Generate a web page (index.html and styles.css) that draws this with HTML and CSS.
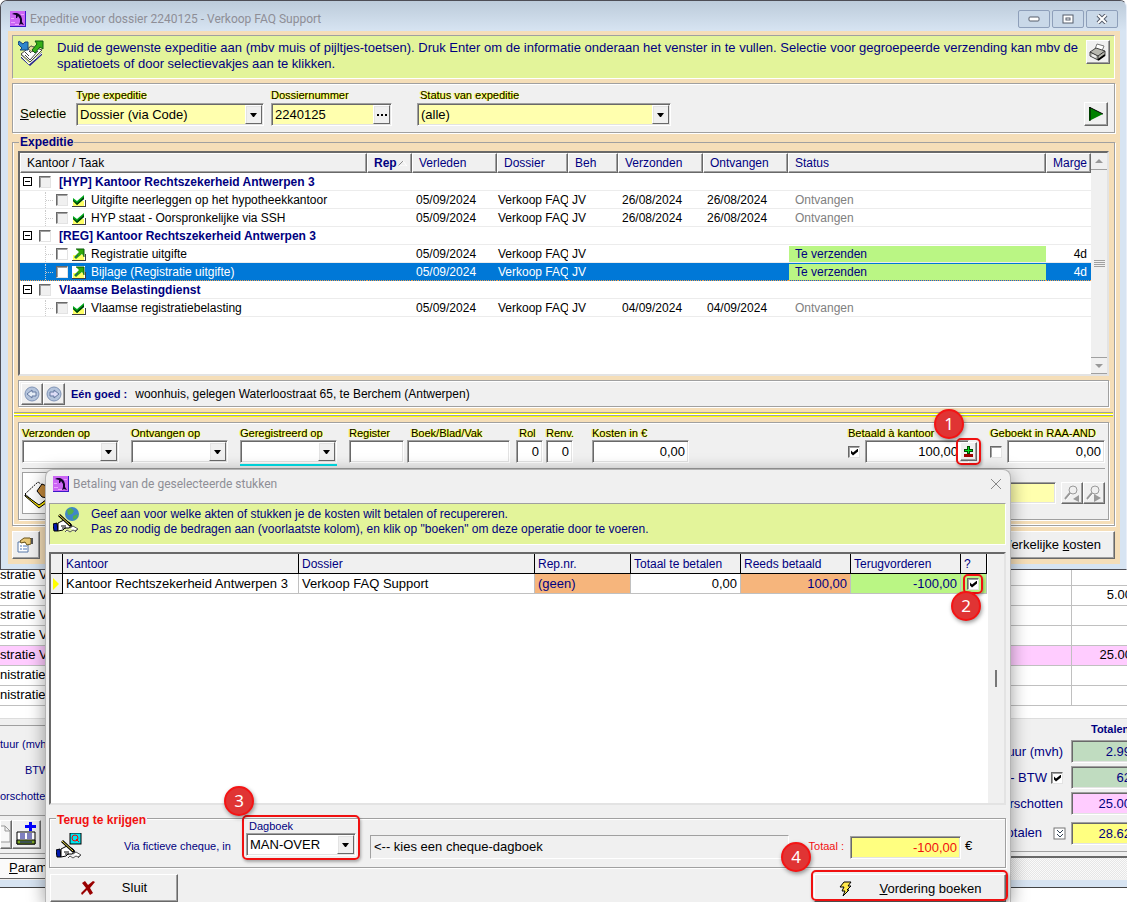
FILE: index.html
```html
<!DOCTYPE html>
<html lang="nl">
<head>
    <meta charset="UTF-8">
    <meta name="viewport" content="width=device-width, initial-scale=1.0">
    <title>Expeditie voor dossier 2240125 - Verkoop FAQ Support</title>
    <link rel="stylesheet" href="styles.css">
</head>
<body>
    <!-- Shared icons -->
    <svg class="sprite" aria-hidden="true">
        <symbol id="dolphin" viewBox="0 0 16 16">
            <rect width="16" height="16" fill="#3a18c8"/>
            <rect width="15" height="15" fill="#cc66f4"/>
            <path d="M1 11h4v1H1zM5 13h4v1H5zM1 7h3v1H1zM11 3h3v1h-3z" fill="#e9a4ff"/>
            <path d="M2 3l2-1h3l2 1 2 2 1 3v3l2 3-3-1-2 1 1-3V8L8 5 7 7H6V4z" fill="#12042c"/>
        </symbol>
        <symbol id="down" viewBox="0 0 7 4"><path d="M0 0h7L4 4H3z" fill="#000"/></symbol>
        <symbol id="done" viewBox="0 0 14 13">
            <path d="M1 7h11v5H1z" fill="#ffff66"/>
            <path d="M0 12h13V6h1v7H0z" fill="#404040"/>
            <path d="M1 4l4 3 7-6v4l-7 6-4-4z" fill="#00a81c"/>
            <path d="M1 6l4 3 7-6v2l-7 6-4-4z" fill="#003c08"/>
        </symbol>
        <symbol id="send" viewBox="0 0 14 13">
            <path d="M0 0h13v12H0z" fill="#fff"/>
            <path d="M1 7h11v5H1z" fill="#ffff66"/>
            <path d="M0 12h13V6h1v7H0z" fill="#404040"/>
            <path d="M4 1h8v8L10 6l-6 5-2-2 5-5z" fill="#2fa80c"/>
            <path d="M4 1h8v8" fill="none" stroke="#0b5a08"/>
            <path d="M3 10l3-3" fill="none" stroke="#1c3c9c"/>
        </symbol>
        <symbol id="hand" viewBox="0 0 26 26">
            <path d="M0 17l4-1 1 8H1z" fill="#0018b0" stroke="#000"/>
            <path d="M5 16l6-3 6 3 2 3-3 2h-4l-2 2-5 1z" fill="#fff" stroke="#000"/>
            <path d="M8 19h5M9 21h4" stroke="#000"/>
            <path d="M6 8l12 11" stroke="#000" stroke-width="3"/>
            <path d="M6 8l11 10" stroke="#f2e34b" stroke-width="1"/>
            <path d="M12 25l2-2 3 2 3-2 2 1 3-2M17 21l3-2 5 3-3 3" fill="#fff" stroke="#555"/>
        </symbol>
        <symbol id="lens" viewBox="0 0 17 17">
            <circle cx="9" cy="5" r="4" fill="#f0f0f0" stroke="#9a9a9a"/>
            <path d="M6 8l-5 6" stroke="#9a9a9a" stroke-width="2"/>
            <path d="M2 15l5-6" stroke="#fff"/>
        </symbol>
    </svg>

    <main class="desktop">
        <!-- Expeditie window -->
        <section class="window">
            <header class="titlebar">
                <svg class="app-icon"><use href="#dolphin"/></svg>
                <h1>Expeditie voor dossier 2240125 - Verkoop FAQ Support</h1>
                <div class="caption-buttons">
                    <button aria-label="Minimaliseren"><svg width="12" height="6"><rect x="1" y="1" width="10" height="4" rx="1" fill="#fff" stroke="#555c6b"/></svg></button>
                    <button aria-label="Maximaliseren"><svg width="12" height="10"><rect x="1" y="1" width="10" height="8" fill="#fff" stroke="#555c6b"/><rect x="4" y="4" width="4" height="2" fill="#fff" stroke="#555c6b"/></svg></button>
                    <button aria-label="Sluiten"><svg width="12" height="10"><path d="M2 1l8 8M10 1L2 9" stroke="#555c6b" stroke-width="4"/><path d="M2 1l8 8M10 1L2 9" stroke="#fff" stroke-width="2"/></svg></button>
                </div>
            </header>

            <div class="client">
                <div class="banner">
                    <svg class="banner-icon" viewBox="0 0 26 26">
                        <path d="M3 14l10-8 11 4-12 12z" fill="#fff" stroke="#444"/>
                        <path d="M3 15l8 9 13-12v3L12 26 3 18z" fill="#2a2a8c"/>
                        <path d="M3 16l8 8 13-11" fill="none" stroke="#fff"/>
                        <path d="M7 15l5 5 8-9M7 12l4 4M11 11l2 2" fill="none" stroke="#444"/>
                        <path d="M10 9l3-3 5 2-4 4z" fill="#e8d89c" stroke="#665"/>
                        <path d="M1 1l4 3 2-2 3 0v8H2l2-2-4-4z" fill="#2f86cc" stroke="#15477c"/>
                        <path d="M17 1h8v8l-3-2-5 6-3-3 5-6z" fill="#36b016" stroke="#0c5a10"/>
                    </svg>
                    <p>Duid de gewenste expeditie aan (mbv muis of pijltjes-toetsen). Druk Enter om de informatie onderaan het venster in te vullen. Selectie voor gegroepeerde verzending kan mbv de spatietoets of door selectievakjes aan te klikken.</p>
                    <button class="btn tool" aria-label="Afdrukken">
                        <svg width="18" height="18" viewBox="0 0 18 18">
                            <path d="M6 6l2-5 7 2-2 5z" fill="#fff" stroke="#777"/>
                            <path d="M1 9l6-4 9 3v4l-7 5-8-4z" fill="#b8b8b0" stroke="#444"/>
                            <path d="M1 9l8 4 7-5M9 13v4" fill="none" stroke="#333"/>
                            <path d="M3 12l4 2" stroke="#eee" stroke-width="2"/>
                            <path d="M9 17l7-5" stroke="#000" stroke-width="2"/>
                        </svg>
                    </button>
                </div>

                <form class="filter">
                    <span class="filter-name"><u>S</u>electie</span>
                    <div class="field type">
                        <label class="glow" for="type">Type expeditie</label>
                        <div class="combo yellow"><select id="type"><option>Dossier (via Code)</option></select><span class="drop"><svg width="7" height="4"><use href="#down"/></svg></span></div>
                    </div>
                    <div class="field number">
                        <label class="glow" for="nummer">Dossiernummer</label>
                        <div class="combo yellow"><input id="nummer" type="text" value="2240125"><button type="button" class="drop" aria-label="Zoeken"><svg width="10" height="2"><path d="M0 0h2v2H0zM4 0h2v2H4zM8 0h2v2H8z"/></svg></button></div>
                    </div>
                    <div class="field status">
                        <label class="glow" for="status">Status van expeditie</label>
                        <div class="combo yellow"><select id="status"><option>(alle)</option></select><span class="drop"><svg width="7" height="4"><use href="#down"/></svg></span></div>
                    </div>
                    <button type="button" class="btn tool run" aria-label="Uitvoeren"><svg width="14" height="14"><path d="M0 0l14 7-14 7z" fill="#008000"/><path d="M1 0v14M0 0l14 7" stroke="#000" fill="none"/></svg></button>
                </form>

                <fieldset class="group">
                    <legend>Expeditie</legend>
                    <div class="tree">
                        <table>
                            <thead>
                                <tr>
                                    <th class="c-task">Kantoor / Taak</th>
                                    <th class="c-rep"><div><span>Rep</span><svg width="10" height="6"><path d="M0 6l5-5" stroke="#888"/><path d="M5 1l4 5H0" stroke="#fff" fill="none"/></svg></div></th>
                                    <th class="c-date">Verleden</th>
                                    <th class="c-file">Dossier</th>
                                    <th class="c-beh">Beh</th>
                                    <th class="c-date">Verzonden</th>
                                    <th class="c-date">Ontvangen</th>
                                    <th>Status</th>
                                    <th class="c-marge">Marge</th>
                                </tr>
                            </thead>
                            <tbody>
                                <tr>
                                    <td colspan="9"><div class="node"><span class="toggle"></span><input type="checkbox" class="grey" aria-label="HYP"><b>[HYP] Kantoor Rechtszekerheid Antwerpen 3</b></div></td>
                                </tr>
                                <tr>
                                    <td><div class="node leaf"><span class="branch"></span><input type="checkbox" class="grey" aria-label="Uitgifte"><svg width="14" height="13"><use href="#done"/></svg><span>Uitgifte neerleggen op het hypotheekkantoor</span></div></td>
                                    <td></td><td>05/09/2024</td><td class="file">Verkoop FAQ</td><td>JV</td><td>26/08/2024</td><td>26/08/2024</td><td class="state">Ontvangen</td><td></td>
                                </tr>
                                <tr>
                                    <td><div class="node leaf"><span class="branch"></span><input type="checkbox" class="grey" aria-label="HYP staat"><svg width="14" height="13"><use href="#done"/></svg><span>HYP staat - Oorspronkelijke via SSH</span></div></td>
                                    <td></td><td>05/09/2024</td><td class="file">Verkoop FAQ</td><td>JV</td><td>26/08/2024</td><td>26/08/2024</td><td class="state">Ontvangen</td><td></td>
                                </tr>
                                <tr>
                                    <td colspan="9"><div class="node"><span class="toggle"></span><input type="checkbox" aria-label="REG"><b>[REG] Kantoor Rechtszekerheid Antwerpen 3</b></div></td>
                                </tr>
                                <tr>
                                    <td><div class="node leaf"><span class="branch"></span><input type="checkbox" aria-label="Registratie"><svg width="14" height="13"><use href="#send"/></svg><span>Registratie uitgifte</span></div></td>
                                    <td></td><td>05/09/2024</td><td class="file">Verkoop FAQ</td><td>JV</td><td></td><td></td><td class="todo"><div>Te verzenden</div></td><td class="marge">4d</td>
                                </tr>
                                <tr class="selected">
                                    <td><div class="node leaf"><span class="branch"></span><input type="checkbox" aria-label="Bijlage"><svg width="14" height="13"><use href="#send"/></svg><span>Bijlage (Registratie uitgifte)</span></div></td>
                                    <td></td><td>05/09/2024</td><td class="file">Verkoop FAQ</td><td>JV</td><td></td><td></td><td class="todo"><div>Te verzenden</div></td><td class="marge">4d</td>
                                </tr>
                                <tr>
                                    <td colspan="9"><div class="node"><span class="toggle"></span><input type="checkbox" class="grey" aria-label="Belastingdienst"><b>Vlaamse Belastingdienst</b></div></td>
                                </tr>
                                <tr>
                                    <td><div class="node leaf"><span class="branch"></span><input type="checkbox" class="grey" aria-label="Vlaamse"><svg width="14" height="13"><use href="#done"/></svg><span>Vlaamse registratiebelasting</span></div></td>
                                    <td></td><td>05/09/2024</td><td class="file">Verkoop FAQ</td><td>JV</td><td>04/09/2024</td><td>04/09/2024</td><td class="state">Ontvangen</td><td></td>
                                </tr>
                            </tbody>
                        </table>
                        <div class="scrollbar">
                            <span class="arrow"><svg width="8" height="4"><path d="M0 4l4-4 4 4z" fill="#999"/></svg></span>
                            <svg width="11" height="7"><path d="M0 0h11v1H0zM0 2h11v1H0zM0 4h11v1H0zM0 6h11v1H0z" fill="#a0a0a0"/></svg>
                            <span class="arrow end"><svg width="8" height="4"><path d="M0 0h8L4 4z" fill="#999"/></svg></span>
                        </div>
                    </div>

                    <div class="goods">
                        <button class="btn nav" aria-label="Vorige"><svg width="16" height="16"><circle cx="8" cy="8" r="7" fill="#b4c4dc" stroke="#7f93b5"/><path d="M3 8l5-4v2h4v4H8v2z" fill="#e4ecf6" stroke="#6478a0"/></svg></button>
                        <button class="btn nav" aria-label="Volgende"><svg width="16" height="16"><circle cx="8" cy="8" r="7" fill="#b4c4dc" stroke="#7f93b5"/><path d="M13 8L8 4v2H4v4h4v2z" fill="#dcdcf6" stroke="#6478a0"/></svg></button>
                        <b>Eén goed :</b>
                        <span>woonhuis, gelegen Waterloostraat 65, te Berchem (Antwerpen)</span>
                    </div>
                    <div class="splitter"></div>

                    <form class="details">
                        <div class="detail-row">
                            <div class="field w-date"><label class="glow" for="verzonden">Verzonden op</label><div class="combo"><input id="verzonden" type="text"><button type="button" class="drop" aria-label="Kalender"><svg width="7" height="4"><use href="#down"/></svg></button></div></div>
                            <div class="field w-date"><label class="glow" for="ontvangen">Ontvangen op</label><div class="combo"><input id="ontvangen" type="text"><button type="button" class="drop" aria-label="Kalender"><svg width="7" height="4"><use href="#down"/></svg></button></div></div>
                            <div class="field w-date active"><label class="glow" for="geregistreerd">Geregistreerd op</label><div class="combo"><input id="geregistreerd" type="text"><button type="button" class="drop" aria-label="Kalender"><svg width="7" height="4"><use href="#down"/></svg></button></div></div>
                            <div class="field w-register"><label class="glow" for="register">Register</label><input class="box" id="register" type="text"></div>
                            <div class="field w-boek"><label class="glow" for="boek">Boek/Blad/Vak</label><input class="box" id="boek" type="text"></div>
                            <div class="field w-rol"><label class="glow" for="rol">Rol</label><input class="box num" id="rol" type="text" value="0"></div>
                            <div class="field w-renv"><label class="glow" for="renv">Renv.</label><input class="box num" id="renv" type="text" value="0"></div>
                            <div class="field w-date"><label class="glow" for="kosten">Kosten in €</label><input class="box num" id="kosten" type="text" value="0,00"></div>
                            <div class="field w-paid">
                                <label class="glow" for="betaald">Betaald à kantoor</label>
                                <div class="line"><input type="checkbox" checked aria-label="Betaald"><input class="box num" id="betaald" type="text" value="100,00">
                                    <span class="marked m-plus"><button type="button" class="btn" aria-label="Betaling"><svg width="9" height="11"><path d="M3 0h3v3h3v3H6v2H3V6H0V3h3z" fill="#004c00"/><path d="M4 1h1v3h3v1H5v2H4V5H1V4h3z" fill="#00e020"/><path d="M0 8h9v3H0z" fill="#a00000"/></svg></button><span class="badge">1</span></span>
                                </div>
                            </div>
                            <div class="field w-booked">
                                <label class="glow" for="geboekt">Geboekt in RAA-AND</label>
                                <div class="line"><input type="checkbox" aria-label="Geboekt"><input class="box num" id="geboekt" type="text" value="0,00"></div>
                            </div>
                        </div>
                        <div class="note-row">
                            <div class="note-icon"><svg width="32" height="34"><path d="M2 18l13-12 15 10-14 14z" fill="#fff" stroke="#000" stroke-dasharray="2 1"/><path d="M2 19l14 10 14-10v3L16 32 2 20z" fill="#ffe800" stroke="#000"/><path d="M14 15l5-7 9 4-3 10-6-1z" fill="#c48a3c" stroke="#000"/></svg></div>
                            <input class="box pale" type="text" aria-label="Opmerking">
                            <button type="button" class="btn lens" aria-label="Vorige zoeken"><svg width="17" height="17"><use href="#lens"/><path d="M15 10v7l-6-3z" fill="#9a9a9a"/></svg></button>
                            <button type="button" class="btn lens" aria-label="Volgende zoeken"><svg width="17" height="17"><use href="#lens"/><path d="M8 9v8l7-4z" fill="#9a9a9a"/></svg></button>
                        </div>
                    </form>
                </fieldset>

                <div class="window-actions">
                    <button class="btn props" aria-label="Eigenschappen"><svg width="18" height="16"><path d="M1 5h10v10H1z" fill="#fff" stroke="#5878a8"/><path d="M3 9h2M3 12h2M6 9h4M6 12h4" stroke="#4a74b8"/><path d="M3 4l4-3h6l1 1v5l-4 1-2-3-4 1z" fill="#e8c878" stroke="#6b5418"/><path d="M14 1h2v6h-2z" fill="#555"/></svg></button>
                    <button class="btn costs"><span>Werkelijke <u>k</u>osten</span></button>
                </div>
            </div>
        </section>

        <!-- Invoice window that shows behind -->
        <section class="invoice">
            <table class="lines">
                <tr><td>stratie V</td><td></td></tr>
                <tr><td>stratie V</td><td>5.00</td></tr>
                <tr><td>stratie V</td><td></td></tr>
                <tr><td>stratie V</td><td></td></tr>
                <tr class="pink"><td>stratie V</td><td>25.00</td></tr>
                <tr><td>nistratie</td><td></td></tr>
                <tr><td>nistratie</td><td></td></tr>
            </table>
            <div class="totals">
                <div class="totals-left">
                    <div class="small-labels"><span>tuur (mvh</span><span>BTW</span><span>orschotten</span></div>
                    <div class="small-tools">
                        <button class="btn" aria-label="Nieuw"><svg width="12" height="22"><path d="M0 3h4l5 5v11H0M4 3v5h5" fill="#f8f8f8" stroke="#999"/></svg></button>
                        <button class="btn" aria-label="Lijn toevoegen"><svg width="22" height="24"><path d="M1 10h18v12H1z" fill="#fff" stroke="#000"/><path d="M1 18h18v4H1z" fill="#7ba428" stroke="#000"/><path d="M4 12h5M4 14h5M4 16h5M11 12h5M11 14h5M11 16h5M4 20h12" stroke="#000080"/><path d="M13 0h3v3h4v3h-4v3h-3V6H9V3h4z" fill="#00f"/></svg></button>
                    </div>
                    <a class="tab" href="#"><u>P</u>aram</a>
                </div>
                <div class="totals-right">
                    <b>Totalen</b>
                    <div class="sum"><label for="s1">uur (mvh)</label><input class="box num green" id="s1" type="text" value="2.99"></div>
                    <div class="sum"><label for="s2">- BTW</label><input type="checkbox" checked aria-label="BTW"><input class="box num green" id="s2" type="text" value="62"></div>
                    <div class="sum"><label for="s3">rschotten</label><input class="box num rose" id="s3" type="text" value="25.00"></div>
                    <div class="sum last"><label for="s4">otalen</label><svg width="11" height="11"><rect x="0" y="0" width="11" height="11" fill="#fff" stroke="#777"/><path d="M3 2l3 3 3-3M3 6l3 3 3-3" fill="none" stroke="#345"/></svg><input class="box num gold" id="s4" type="text" value="28.62"></div>
                    <div class="hatch"></div>
                </div>
            </div>
            <div class="invoice-edge"></div>
        </section>

        <!-- Payment dialog -->
        <section class="dialog">
            <header>
                <svg class="app-icon"><use href="#dolphin"/></svg>
                <h2>Betaling van de geselecteerde stukken</h2>
                <button class="close" aria-label="Sluiten"><svg width="12" height="12"><path d="M1 1l10 10M11 1L1 11" stroke="#888"/></svg></button>
            </header>
            <div class="banner">
                <svg class="banner-icon" viewBox="0 0 26 26"><circle cx="19" cy="7" r="7" fill="#3f86c8"/><path d="M14 3l4-2 3 3-2 3-4 1zM20 9l5-2-1 4-4 2z" fill="#52b04c"/><use href="#hand"/></svg>
                <p>Geef aan voor welke akten of stukken je de kosten wilt betalen of recupereren.<br>Pas zo nodig de bedragen aan (voorlaatste kolom), en klik op "boeken" om deze operatie door te voeren.</p>
            </div>
            <div class="pay-grid">
                <table>
                    <thead>
                        <tr><th class="p-mark"></th><th class="p-name">Kantoor</th><th>Dossier</th><th class="p-rep">Rep.nr.</th><th class="p-sum">Totaal te betalen</th><th class="p-sum">Reeds betaald</th><th class="p-sum">Terugvorderen</th><th class="p-check">?</th></tr>
                    </thead>
                    <tbody>
                        <tr>
                            <td class="mark"><svg width="6" height="12"><path d="M0 0l6 6-6 6z" fill="#ff0"/></svg></td>
                            <td>Kantoor Rechtszekerheid Antwerpen 3</td>
                            <td>Verkoop FAQ Support</td>
                            <td class="orange">(geen)</td>
                            <td class="r">0,00</td>
                            <td class="r orange">100,00</td>
                            <td class="r lime">-100,00</td>
                            <td class="lime tick"><span class="marked m-tick"><input type="checkbox" checked aria-label="Terugvorderen"><span class="badge">2</span></span></td>
                        </tr>
                    </tbody>
                </table>
                <div class="pay-scroll"><span></span></div>
            </div>
            <fieldset class="refund">
                <legend>Terug te krijgen</legend>
                <svg class="banner-icon" viewBox="0 0 26 26"><rect x="14" y="0" width="11" height="11" fill="#00e5ee" stroke="#000"/><circle cx="19" cy="5" r="3" fill="none" stroke="#f00"/><path d="M20 6l3 3" stroke="#f00"/><use href="#hand"/></svg>
                <span class="via">Via fictieve cheque, in</span>
                <div class="marked m-book field">
                    <label for="dagboek">Dagboek</label>
                    <div class="combo"><select id="dagboek"><option>MAN-OVER</option></select><span class="drop"><svg width="7" height="4"><use href="#down"/></svg></span></div>
                    <span class="badge">3</span>
                </div>
                <output class="hint">&lt;-- kies een cheque-dagboek</output>
                <label class="total-label" for="totaal">Totaal :</label>
                <input class="box num gold total" id="totaal" type="text" value="-100,00">
                <span>€</span>
            </fieldset>
            <footer>
                <button class="btn shut"><svg width="14" height="14"><path d="M1 2l3-2 3 4 5-4 2 1-5 6 3 5-3 2-3-5-5 5-1-2 5-5z" fill="#900"/></svg><span>Sluit</span></button>
                <div class="marked m-post">
                    <button class="btn post"><svg width="14" height="16"><path d="M5 1h7L9 5h3L8 9h2l-6 6 2-5H3l2-4H1z" fill="#ffe94a" stroke="#000"/></svg><span><u>V</u>ordering boeken</span></button>
                    <span class="badge">4</span>
                </div>
            </footer>
        </section>
    </main>
</body>
</html>
```

FILE: styles.css
```css
:root {
    --face: #f0f0f0;
    --peach: #f5deb8;
    --frame: #d7e4f2;
    --lime: #e3f49a;
    --navy: #000080;
    --shade: #a0a0a0;
    --dark: #696969;
    --green: #baf684;
    --orange: #f6b57c;
    --red: #f01010;
}

* {
    box-sizing: border-box;
    margin: 0;
    padding: 0;
}

body {
    font: 13px/16px "Liberation Sans", Arial, sans-serif;
    color: #000;
    background: #fff;
    overflow: hidden;
}

button, input, select {
    font: inherit;
    color: inherit;
}

fieldset { min-width: 0; border: 0; }

.sprite { position: absolute; width: 0; height: 0; }

.desktop {
    position: relative;
    min-height: 100vh;
    overflow: hidden;
}

/* ---- shared controls ---- */
.btn {
    display: flex;
    align-items: center;
    justify-content: center;
    background: var(--face);
    border: 1px solid;
    border-color: #fff var(--dark) var(--dark) #fff;
    box-shadow: inset -1px -1px var(--shade);
    flex: none;
}

.tool { width: 24px; height: 24px; }

.box, .combo {
    height: 23px;
    background: #fff;
    border: 1px solid;
    border-color: var(--shade) #fff #fff var(--shade);
    box-shadow: inset 1px 1px var(--dark), inset -1px -1px #e3e3e3;
    min-width: 0;
}

.box { width: 100%; padding: 0 3px; border-radius: 0; outline: 0; }
.num { text-align: right; }
.pale { background: #ffffae; }
.green { background: #c0dcc0; color: var(--navy); }
.rose { background: #fcf; color: var(--navy); }
.gold { background: #ffff80; }

.combo {
    display: flex;
    padding: 1px;
}

.combo select, .combo input {
    flex: 1;
    min-width: 0;
    appearance: none;
    border: 0;
    background: none;
    outline: 0;
    padding-left: 2px;
}

.drop {
    display: flex;
    align-items: center;
    justify-content: center;
    width: 17px;
    background: var(--face);
    border: 1px solid;
    border-color: #fff var(--dark) var(--dark) #fff;
    box-shadow: inset 1px 1px #e3e3e3;
}

.yellow { background: #ffffae; }

.field label {
    display: block;
    font-size: 11px;
    line-height: 14px;
    white-space: nowrap;
}

.glow { text-shadow: 1px 0 #ff0, -1px 0 #ffff60; }

input[type="checkbox"] {
    appearance: none;
    flex: none;
    width: 12px;
    height: 12px;
    background: #fff;
    border: 1px solid;
    border-color: var(--dark) #e3e3e3 #e3e3e3 var(--dark);
    box-shadow: inset 1px 1px var(--shade);
}

input[type="checkbox"].grey { background: var(--face); }

input[type="checkbox"]:checked::before {
    content: "";
    display: block;
    width: 7px;
    height: 7px;
    margin: 2px;
    background: #000;
    clip-path: polygon(0 2px, 2px 4px, 7px 0, 7px 3px, 2px 7px, 0 5px);
}

.app-icon { width: 16px; height: 16px; flex: none; }
.banner-icon { width: 26px; height: 26px; flex: none; }

.banner {
    display: flex;
    align-items: flex-start;
    background: var(--lime);
    color: var(--navy);
    border: 1px solid;
    border-color: var(--shade) #fff #fff var(--shade);
}

.banner p { flex: 1; }

/* numbered step markers */
.marked { position: relative; }

.marked::after {
    content: "";
    position: absolute;
    inset: -4px;
    border: 2px solid var(--red);
    border-radius: 5px;
    box-shadow: 1px 2px 3px rgba(0, 0, 0, 0.3);
    pointer-events: none;
}

.badge {
    position: absolute;
    z-index: 5;
    width: 30px;
    height: 30px;
    border-radius: 50%;
    border: 2px solid #f41414;
    background: #e03434;
    color: #fff;
    font: 17px/26px "Noto Sans", sans-serif;
    text-align: center;
    box-shadow: 1px 2px 4px rgba(0, 0, 0, 0.4);
}

/* ---- main window ---- */
.window {
    position: relative;
    background: var(--frame);
    border: 1px solid #4d4d55;
    border-right-color: #e8eef8;
    border-radius: 7px 7px 0 0;
    padding: 0 6px 5px 7px;
}

.titlebar {
    display: flex;
    align-items: center;
    height: 30px;
    margin: 0 -6px 0 -7px;
    padding: 6px 8px 0 9px;
    background: linear-gradient(#bccbda, #d7e4f2);
    border-radius: 6px 6px 0 0;
}

.titlebar h1, .dialog h2 {
    flex: 1;
    margin-left: 4px;
    color: #8e8e96;
    font: 12px/16px Roboto, "Noto Sans", sans-serif;
}

.caption-buttons { display: flex; gap: 2px; }

.caption-buttons button {
    display: flex;
    align-items: center;
    justify-content: center;
    width: 32px;
    height: 18px;
    background: #c9d8e8;
    border: 1px solid #8e9fba;
    border-radius: 2px;
}

.client {
    background: var(--peach);
    padding: 4px 5px 5px 4px;
}

.client > .banner {
    height: 44px;
    padding: 4px 4px 4px 5px;
}

.client > .banner p { margin-left: 13px; }

.filter {
    display: flex;
    align-items: flex-end;
    height: 50px;
    margin-top: 4px;
    padding: 0 6px 6px 7px;
    background: var(--face);
    border: 1px solid var(--shade);
    box-shadow: inset 1px 1px #fff, 1px 1px #fff;
}

.filter-name { width: 56px; padding-bottom: 4px; text-shadow: 1px 0 #ffffa0; }
.filter .type { width: 188px; }
.filter .number { width: 121px; margin-left: 7px; }
.filter .status { width: 254px; margin-left: 25px; }
.filter label { margin-bottom: 1px; }
.filter .status label { padding-left: 3px; }
.run { margin-left: auto; }

.group {
    margin-top: 1px;
    padding: 1px 5px 5px;
    border: 1px solid var(--shade);
    box-shadow: inset 1px 0 #fff, inset 0 -1px #fff, 1px 1px #fff;
}

.group legend {
    padding: 0 1px;
    margin-left: 1px;
    color: var(--navy);
    font-size: 12px;
    font-weight: bold;
    line-height: 16px;
}

.tree {
    display: flex;
    height: 225px;
    background: #fff;
    border: 2px solid;
    border-color: var(--dark) #e3e3e3 #e3e3e3 var(--dark);
}

.tree table {
    flex: 1;
    width: 100%;
    align-self: flex-start;
    table-layout: fixed;
    border-collapse: separate;
    border-spacing: 0;
    font-size: 12px;
}

.tree th {
    height: 20px;
    padding-left: 6px;
    overflow: hidden;
    text-align: left;
    font-weight: normal;
    color: var(--navy);
    background: var(--face);
    border: 1px solid;
    border-color: #fff var(--dark) var(--dark) #fff;
    box-shadow: inset -1px -1px var(--shade);
    white-space: nowrap;
    line-height: 16px;
}

.tree th.c-task { width: 347px; color: #000; }
.tree th.c-rep { width: 45px; font-weight: bold; }
.c-rep div { display: flex; align-items: center; gap: 1px; }
.c-date { width: 85px; }
.c-file { width: 71px; }
.c-beh { width: 50px; }
.c-marge { width: 45px; }

.tree td {
    height: 18px;
    padding-left: 4px;
    overflow: hidden;
    white-space: nowrap;
    border-bottom: 1px solid #ececec;
    line-height: 16px;
}

.tree td.file { padding-left: 1px; }
.tree td.state { padding-left: 7px; color: #808080; }
.tree td.todo { padding-left: 1px; }
.todo div { height: 16px; padding-left: 6px; background: var(--green); color: var(--navy); }
.tree td.marge { padding-right: 4px; text-align: right; }

.selected td {
    background: #0078d7;
    color: #fff;
    border-bottom: 1px dotted #f0a050;
}

.node { display: flex; align-items: center; height: 16px; margin-left: -1px; }
.node b { margin-left: 8px; color: var(--navy); }
.node svg { margin: 2px 5px 0 4px; }

.toggle {
    width: 9px;
    height: 9px;
    margin-right: 7px;
    border: 1px solid #000;
    background: linear-gradient(#000, #000) center / 5px 1px no-repeat;
}

.branch {
    width: 9px;
    height: 16px;
    margin: 0 2px 0 22px;
    border-left: 1px dotted #ccc;
    background: linear-gradient(90deg, #ccc 1px, transparent 1px) 0 8px / 2px 1px repeat-x;
}

.scrollbar {
    display: flex;
    flex-direction: column;
    align-items: center;
    justify-content: space-between;
    width: 16px;
    background: var(--face);
}

.arrow {
    display: flex;
    align-items: center;
    justify-content: center;
    width: 16px;
    height: 17px;
    border-bottom: 1px solid var(--shade);
}

.arrow.end { border-top: 1px solid var(--shade); }

.goods {
    display: flex;
    align-items: center;
    height: 27px;
    margin-top: 4px;
    padding-left: 2px;
    background: var(--face);
    border: 1px solid var(--shade);
    box-shadow: inset 1px 1px #fff, 1px 1px #fff;
    font-size: 12px;
}

.nav { width: 22px; height: 22px; }
.goods b { margin: 0 8px 0 6px; color: var(--navy); font-size: 11px; }

.splitter {
    height: 5px;
    margin: 5px -4px;
    border-top: 1px solid var(--shade);
    background: linear-gradient(#ff0 0 1px, #fff 1px 2px, #a0a0a0 2px 3px, #ff0 3px 4px);
}

.details {
    background: var(--face);
    border: 1px solid var(--shade);
    box-shadow: inset 1px 1px #fff, 1px 1px #fff;
    padding: 3px 3px 2px;
}

.detail-row {
    display: flex;
    height: 43px;
    border-bottom: 1px solid var(--shade);
}

.w-date { width: 97px; margin-right: 12px; }
.w-register { width: 55px; margin-right: 3px; }
.w-boek { width: 103px; margin-right: 6px; }
.w-boek label { padding-left: 4px; }
.w-rol { width: 27px; margin-right: 3px; }
.w-rol label { padding-left: 3px; }
.w-renv { width: 27px; margin-right: 19px; }
.active::after { content: ""; display: block; height: 2px; margin-top: 1px; background: #00e0e8; }
.w-paid { width: 130px; margin-left: auto; margin-right: 12px; }
.w-booked { width: 115px; }
.line { display: flex; align-items: center; }
.line .box { margin-left: 5px; }
.w-paid .box { width: 104px; padding-right: 10px; }
.m-plus { margin-left: -9px; flex: none; }
.m-plus .btn { width: 17px; height: 19px; }
.m-plus .badge { left: -26px; top: -33px; }

.note-row { display: flex; align-items: center; height: 48px; }
.note-icon { width: 40px; height: 42px; padding-top: 3px; background: #fff; border: 1px solid var(--shade); overflow: hidden; }
.note-row .pale { flex: 1; margin: 0 5px; height: 22px; }
.lens { width: 22px; height: 22px; }

.window-actions {
    display: flex;
    justify-content: space-between;
    margin-top: 5px;
}

.props { width: 28px; height: 28px; }
.costs { width: 146px; height: 28px; justify-content: flex-end; padding-right: 13px; }

/* ---- invoice behind ---- */
.invoice { margin: -5px -5px 0 0; }

.lines {
    width: 100%;
    border-collapse: collapse;
}

.lines td { height: 20px; border-bottom: 1px solid #c0c0c0; line-height: 16px; }
.lines td + td { width: 61px; border-left: 1px solid #c0c0c0; text-align: right; }
.pink { background: #fcf; }

.totals {
    display: flex;
    justify-content: space-between;
    height: 162px;
    margin-top: 12px;
    background: var(--face);
    border-top: 1px solid #ddd;
    color: var(--navy);
}

.totals-left { width: 90px; }

.small-labels {
    display: grid;
    gap: 10px;
    align-content: start;
    height: 91px;
    margin-top: 6px;
    padding-top: 10px;
    border: 1px solid var(--shade);
    border-width: 1px 0;
    font-size: 11px;
}

.small-labels span:nth-child(2) { padding-left: 25px; }

.small-tools {
    display: flex;
    height: 38px;
    padding-top: 4px;
    border-bottom: 1px solid var(--shade);
}

.small-tools .btn { width: 29px; height: 29px; }
.small-tools .btn:first-child { width: 12px; }

.tab {
    display: block;
    height: 21px;
    margin-top: 4px;
    padding: 1px 9px;
    background: #fafafa;
    border: 1px solid #666;
    border-left: 0;
    color: #000;
    text-decoration: none;
}

.totals-right { width: 130px; padding-top: 2px; }
.totals-right > b { display: block; height: 18px; padding-left: 89px; font-size: 11px; }
.sum { display: flex; align-items: center; justify-content: flex-end; height: 26px; white-space: nowrap; }
.sum .box { width: 61px; margin-left: 8px; padding: 0; }
.sum input[type="checkbox"] { margin-left: 4px; }
.sum.last { height: 33px; }
.sum svg { margin-left: 12px; overflow: visible; }
.sum.last .box { margin-left: 6px; }

.hatch {
    height: 27px;
    margin-top: 1px;
    border-top: 1px solid var(--shade);
    background: linear-gradient(var(--face) 0 4px, #696969 4px 6px, transparent 6px), repeating-conic-gradient(#e6e6e6 0 25%, #fafafa 0 50%) 0 0 / 2px 2px;
}

.invoice-edge { height: 8px; background: var(--frame); border-bottom: 1px solid #444; }

/* ---- payment dialog ---- */
.dialog {
    position: absolute;
    top: 469px;
    bottom: 0;
    left: 45px;
    right: 116px;
    display: flex;
    flex-direction: column;
    padding: 0 4px 0 3px;
    background: var(--face);
    border: 1px solid #b4b4b4;
    border-bottom: 0;
    border-radius: 8px 8px 0 0;
    box-shadow: 0 4px 18px rgba(0, 0, 0, 0.4);
}

.dialog > header {
    display: flex;
    align-items: center;
    height: 33px;
    padding: 0 4px 5px;
}

.close { border: 0; background: none; line-height: 0; }

.dialog > .banner { height: 42px; padding: 3px; }
.dialog .banner p { margin-left: 12px; font-size: 12px; line-height: 15px; }

.pay-grid {
    flex: 1;
    display: flex;
    align-items: stretch;
    justify-content: space-between;
    margin: 7px 0 13px;
    background: #fff;
    border: 2px solid;
    border-color: var(--dark) #e3e3e3 #e3e3e3 var(--dark);
}

.pay-grid table {
    flex: 1;
    align-self: flex-start;
    table-layout: fixed;
    width: 100%;
    margin-right: 1px;
    border-collapse: separate;
    border-spacing: 0;
}

.pay-grid th {
    height: 20px;
    padding-left: 3px;
    text-align: left;
    font-size: 12px;
    font-weight: normal;
    color: var(--navy);
    background: var(--face);
    border-right: 1px solid #000;
    border-bottom: 1px solid #000;
    white-space: nowrap;
}

.pay-grid td {
    height: 20px;
    padding: 0 3px;
    border-right: 1px solid #c0c0c0;
    border-bottom: 1px solid #c0c0c0;
    white-space: nowrap;
}

.p-mark { width: 12px; }
.p-name { width: 236px; }
.p-rep { width: 96px; }
.p-sum { width: 110px; }
.p-check { width: 26px; }
.pay-grid td.mark { padding: 0 2px; background: var(--face); border-color: #000; line-height: 0; }
.pay-grid .r { text-align: right; }
.pay-grid td.orange { background: var(--orange); color: var(--navy); }
.pay-grid td.lime { background: var(--green); color: var(--navy); }
.pay-grid td.tick { padding: 0 6px; }
.m-tick { display: block; width: 12px; height: 12px; }
.m-tick input { display: block; }
.m-tick .badge { left: -16px; top: 13px; }

.pay-scroll {
    display: flex;
    align-items: center;
    justify-content: center;
    width: 16px;
    background: var(--face);
}

.pay-scroll span { width: 2px; height: 17px; background: #777; }

.refund {
    position: relative;
    display: flex;
    align-items: flex-end;
    height: 50px;
    padding: 0 6px 5px;
    border: 1px solid var(--shade);
    box-shadow: inset 1px 1px #fff, 1px 1px #fff;
}

.refund legend {
    float: left;
    position: absolute;
    top: -7px;
    left: 6px;
    padding: 0 1px;
    background: var(--face);
    color: var(--red);
    font-size: 12px;
    font-weight: bold;
}

.via, .total-label, .refund .total + span { padding-bottom: 5px; }
.via { width: 115px; margin-left: 42px; color: var(--navy); font-size: 11px; white-space: nowrap; }

.m-book { width: 110px; margin: 0 14px 3px 7px; }
.m-book label { padding-left: 3px; color: var(--navy); }
.m-book .badge { left: -22px; top: -33px; }

.hint {
    flex: 1;
    height: 24px;
    padding: 3px;
    border: 1px solid;
    border-color: var(--shade) #fff #fff var(--shade);
}

.total-label { margin: 0 6px 0 20px; color: var(--red); font-size: 11px; }
.refund .total { width: 111px; color: var(--red); }
.refund .total + span { width: 38px; padding-left: 4px; }

.dialog footer {
    display: flex;
    justify-content: space-between;
    margin-top: 6px;
    padding-left: 1px;
}

.shut { width: 128px; height: 28px; gap: 27px; }
.post { width: 192px; height: 28px; gap: 27px; padding-top: 2px; }
.m-post .badge { left: -33px; top: -32px; }
.m-post::after { inset: -4px -2px 1px -3px; }
```
